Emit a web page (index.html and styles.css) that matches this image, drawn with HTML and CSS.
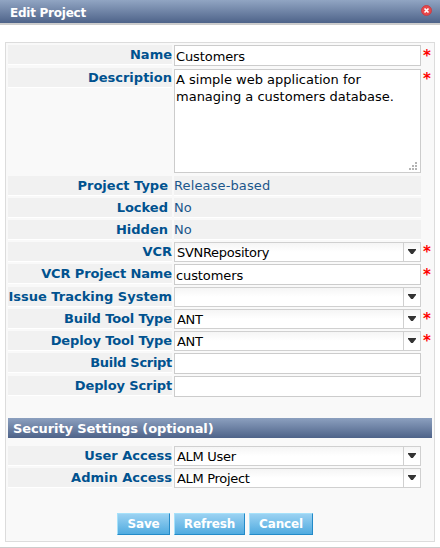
FILE: index.html
```
<!DOCTYPE html>
<html lang="en">
<head>
<meta charset="utf-8">
<title>Edit Project</title>
<link rel="stylesheet" href="styles.css">
</head>
<body>
<div class="dialog">
  <header class="titlebar">
    <h1 class="title">Edit Project</h1>
    <svg class="close" width="12" height="12" viewBox="0 0 12 12"><circle cx="6.5" cy="6.5" r="5" fill="#e8474a" stroke="#c8383c" stroke-width=".8"/><path d="M4.5 4.5l4 4M8.5 4.5l-4 4" stroke="#fff" stroke-width="1.7"/></svg>
  </header>
  <main class="panel">
    <div class="row text"><div class="label">Name</div><div class="input">Customers</div><span class="req">*</span></div>
    <div class="row area"><div class="label">Description</div><div class="textarea">A simple web application for<br>managing a customers database.
      <svg class="grip" width="8" height="8" viewBox="0 0 8 8" fill="#b4b4b4"><path d="M6 0h2v2H6zM3 3h2v2H3zM6 3h2v2H6zM0 6h2v2H0zM3 6h2v2H3zM6 6h2v2H6z"/></svg></div><span class="req">*</span></div>
    <div class="row static"><div class="label">Project Type</div><div class="value">Release-based</div></div>
    <div class="row static"><div class="label">Locked</div><div class="value">No</div></div>
    <div class="row static"><div class="label">Hidden</div><div class="value">No</div></div>
    <div class="row"><div class="label">VCR</div><div class="select"><span>SVNRepository</span><i class="arrow"></i></div><span class="req">*</span></div>
    <div class="row text"><div class="label tight">VCR Project Name</div><div class="input">customers</div><span class="req">*</span></div>
    <div class="row"><div class="label">Issue Tracking System</div><div class="select"><span></span><i class="arrow"></i></div></div>
    <div class="row"><div class="label tight">Build Tool Type</div><div class="select"><span>ANT</span><i class="arrow"></i></div><span class="req">*</span></div>
    <div class="row"><div class="label tight">Deploy Tool Type</div><div class="select"><span>ANT</span><i class="arrow"></i></div><span class="req">*</span></div>
    <div class="row text"><div class="label tighter">Build Script</div><div class="input"></div></div>
    <div class="row text"><div class="label tight">Deploy Script</div><div class="input"></div></div>
    <h2 class="section">Security Settings (optional)</h2>
    <div class="row"><div class="label">User Access</div><div class="select"><span>ALM User</span><i class="arrow"></i></div></div>
    <div class="row"><div class="label">Admin Access</div><div class="select"><span>ALM Project</span><i class="arrow"></i></div></div>
    <div class="actions"><button class="btn save">Save</button><button class="btn refresh">Refresh</button><button class="btn cancel">Cancel</button></div>
  </main>
</div>
</body>
</html>
```

FILE: styles.css
```
* { box-sizing: border-box; }
body { margin: 0; background: #fff; font-family: Verdana, "DejaVu Sans", sans-serif; font-size: 13px; }
.dialog { height: 548px; border-bottom: 1px solid #ccc; overflow: hidden; }
.titlebar { display: flex; justify-content: space-between; height: 25px; padding: 0 8px 0 10px; border-bottom: 2px solid #ccc; background: linear-gradient(#91a5c3, #4e6389) padding-box; }
.title { margin: 0; font-size: 12px; line-height: 27px; letter-spacing: -.25px; color: #fff; white-space: nowrap; }
.close { margin-top: 4px; }
.panel { width: 430px; height: 500px; margin: 17px 0 0 5px; padding: 2px; border: 1px solid #dcdcdc; background: #f9f9f9; }
.row { display: flex; align-items: flex-start; height: 20px; margin-bottom: 2px; }
.row.text { height: 21px; }
.row.area { height: 105px; margin: 2px 0 3px; }
.label { width: 164px; height: 20px; margin-right: 2px; border-bottom: 1px solid #fff; background: #f1f1f1; color: #00528f; font-weight: bold; line-height: 19px; text-align: right; white-space: nowrap; }
.tight { letter-spacing: -.12px; }
.tighter { letter-spacing: -.3px; }
.static .label { padding-right: 4px; }
.value { width: 247px; height: 20px; border-bottom: 1px solid #fff; background: #f1f1f1; color: #1b568b; line-height: 20px; letter-spacing: .12px; }
.input { width: 247px; height: 21px; padding-left: 1px; border: 1px solid #ccc; background: #fff; color: #000; line-height: 22px; letter-spacing: -.1px; }
.textarea { position: relative; width: 247px; height: 104px; margin-top: 1px; padding: 1px; border: 1px solid #ccc; background: #fff; line-height: 17px; white-space: nowrap; }
.grip { position: absolute; right: 3px; bottom: 2px; }
.select { display: flex; width: 247px; height: 20px; border: 1px solid #d0d0d0; background: linear-gradient(#f5f5f5, #fff 9px); line-height: 20px; letter-spacing: -.3px; }
.select span { flex: 1; padding-left: 2px; }
.arrow { width: 17px; border-left: 1px solid #d0d0d0; padding: 6px 0 0 4px; }
.arrow::before { content: ""; display: block; width: 8px; height: 5px; background: #333; clip-path: polygon(0 0, 100% 0, 100% 20%, 60% 100%, 40% 100%, 0 20%); }
.req { margin-left: 2px; width: 9px; color: #f00; font-weight: bold; font-size: 15px; line-height: 20px; }
.text .req, .area .req { line-height: 22px; }
.section { height: 20px; margin: 21px 0 8px; padding-left: 5px; background: linear-gradient(#8ca0bf, #4e6389); color: #fff; font-size: 13px; line-height: 21px; letter-spacing: -.1px; }
.actions { display: flex; gap: 4px; margin: 25px 0 0 109px; }
.btn { height: 22px; padding: 0; border: solid; border-width: 1px; border-color: #a6e1fa #238ac8 #238ac8 #a6e1fa; background: linear-gradient(#9bd2f2, #50abe0); color: #fff; font: bold 12px/20px Verdana, "DejaVu Sans", sans-serif; letter-spacing: -.15px; }
.save { width: 53px; }
.refresh { width: 71px; }
.cancel { width: 64px; }
```
